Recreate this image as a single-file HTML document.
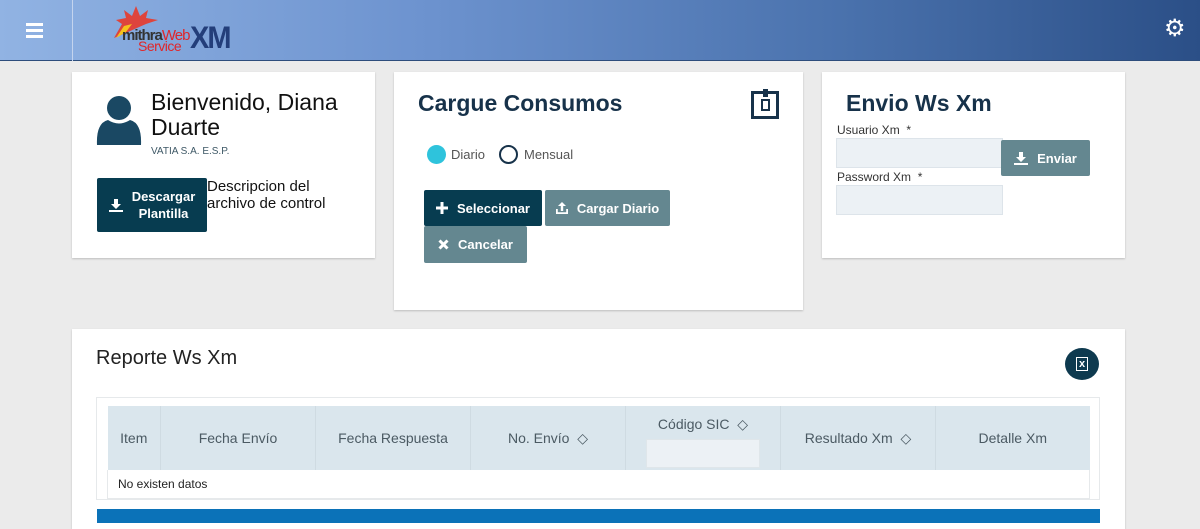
<!DOCTYPE html>
<html><head><meta charset="utf-8"><style>
*{box-sizing:border-box;margin:0;padding:0}
body{width:1200px;height:523px;overflow:hidden;background:#ebebeb;font-family:"Liberation Sans",sans-serif;position:relative}
.hdr{position:absolute;left:0;top:0;width:1200px;height:61px;background:linear-gradient(90deg,#91b3e3 0%,#6d93cf 35%,#4a72ad 70%,#2b4f87 100%);border-bottom:1px solid #2d4d7c}
.sep{position:absolute;left:72px;top:0;width:1px;height:61px;background:#c4d4ee}
.card{position:absolute;background:#fff;box-shadow:0 1px 2px rgba(0,0,0,.2)}
.btn{position:absolute;color:#fff;font-size:13px;font-weight:bold;display:flex;align-items:center;justify-content:center;border-radius:2px}
.btn svg{margin-right:9px;flex:none}
.dark{background:#073c50}
.gray{background:#648790}
.t{position:absolute;white-space:nowrap}
.inp{position:absolute;background:#ecf1f5;border:1px solid #dde4ea}
th{background:#dae6ed;color:#4b5a63;font-weight:normal;font-size:14px;border-right:1px solid #cfdbe2}
</style></head><body>
<div class="hdr"></div>
<div class="sep"></div>
<div style="position:absolute;left:26px;top:23px;width:17px;height:3px;background:#fff;box-shadow:0 6px 0 #fff,0 12px 0 #fff"></div>
<svg style="position:absolute;left:112px;top:4px" width="50" height="34"><path d="M2 34 L10 20 L4 16 L14 14 L12 6 L20 12 L24 2 L28 12 L36 6 L34 14 L46 16 L34 20 Z" fill="#e8392a" opacity=".9"/><path d="M4 34 L12 22 L20 20 L14 28 Z" fill="#f5c21b"/></svg>
<div class="t" style="left:122px;top:27px;font-size:15px;font-weight:bold;color:#333;letter-spacing:-1px">mithra<span style="color:#e0262a;font-weight:normal">Web</span></div>
<div class="t" style="left:138px;top:38px;font-size:14px;color:#e0262a;letter-spacing:-0.5px">Service</div>
<div class="t" style="left:190px;top:22px;font-size:29px;font-weight:bold;color:#233e7a;letter-spacing:-2px;transform:scaleY(1.1)">XM</div>
<div class="t" style="left:1164px;top:17px;font-size:24px;color:#fff;line-height:24px">⚙</div>

<div class="card" style="left:72px;top:72px;width:303px;height:186px"></div>
<svg style="position:absolute;left:96px;top:95px" width="46" height="50"><circle cx="23" cy="13" r="12" fill="#1a4863"/><path d="M1 50 Q0 28 12 25 Q23 32 34 25 Q46 28 45 50 Z" fill="#1a4863"/></svg>
<div class="t" style="left:151px;top:90px;font-size:23px;color:#111;line-height:25px">Bienvenido, Diana<br>Duarte</div>
<div class="t" style="left:151px;top:146px;font-size:10px;color:#3e5866">VATIA S.A. E.S.P.</div>
<div class="btn dark" style="left:97px;top:178px;width:110px;height:54px;line-height:17px;text-align:center"><svg width="14" height="13" viewBox="0 0 14 13"><path d="M5 0h4v5h3L7 10 2 5h3z M0 11h14v2H0z" fill="#fff"/></svg>Descargar<br>Plantilla</div>
<div class="t" style="left:207px;top:178px;font-size:15px;color:#111;line-height:17px">Descripcion del<br>archivo de control</div>

<div class="card" style="left:394px;top:72px;width:409px;height:238px"></div>
<div class="t" style="left:418px;top:90px;font-size:23px;font-weight:bold;color:#17324a">Cargue Consumos</div>
<div style="position:absolute;left:751px;top:91px;width:28px;height:28px;border:3px solid #17324a"><div style="position:absolute;left:7px;top:5px;width:9px;height:12px;border:2px solid #17324a"></div><div style="position:absolute;left:9px;top:-5px;width:5px;height:8px;background:#17324a"></div></div>
<div style="position:absolute;left:427px;top:145px;width:19px;height:19px;border-radius:50%;background:#2ec3dc"></div>
<div class="t" style="left:451px;top:147px;font-size:13px;color:#555">Diario</div>
<div style="position:absolute;left:499px;top:145px;width:19px;height:19px;border-radius:50%;border:2px solid #17324a"></div>
<div class="t" style="left:524px;top:147px;font-size:13px;color:#555">Mensual</div>
<div class="btn dark" style="left:424px;top:190px;width:118px;height:36px"><svg width="12" height="12"><path d="M4.5 0h3v4.5H12v3H7.5V12h-3V7.5H0v-3h4.5z" fill="#fff"/></svg>Seleccionar</div>
<div class="btn gray" style="left:545px;top:190px;width:125px;height:36px"><svg width="12" height="12"><path d="M6 0l4 4H7.2v5H4.8V4H2z M0 7h1.8v3.2h8.4V7H12v5H0z" fill="#fff"/></svg>Cargar Diario</div>
<div class="btn gray" style="left:424px;top:226px;width:103px;height:37px"><svg width="11" height="11"><path d="M1.5 1.5l8 8M9.5 1.5l-8 8" stroke="#fff" stroke-width="3"/></svg>Cancelar</div>

<div class="card" style="left:822px;top:72px;width:303px;height:186px"></div>
<div class="t" style="left:846px;top:90px;font-size:23px;font-weight:bold;color:#17324a">Envio Ws Xm</div>
<div class="t" style="left:837px;top:123px;font-size:12px;color:#333">Usuario Xm &nbsp;*</div>
<div class="inp" style="left:836px;top:138px;width:167px;height:30px"></div>
<div class="btn gray" style="left:1001px;top:140px;width:89px;height:36px"><svg width="14" height="13" viewBox="0 0 14 13"><path d="M5 0h4v5h3L7 10 2 5h3z M0 11h14v2H0z" fill="#fff"/></svg>Enviar</div>
<div class="t" style="left:837px;top:170px;font-size:12px;color:#333">Password Xm &nbsp;*</div>
<div class="inp" style="left:836px;top:185px;width:167px;height:30px"></div>

<div class="card" style="left:72px;top:329px;width:1053px;height:200px"></div>
<div class="t" style="left:96px;top:347px;font-size:20px;color:#222">Reporte Ws Xm</div>
<div style="position:absolute;left:1065px;top:348px;width:34px;height:32px;border-radius:50%;background:#0e3a4f;color:#fff;font-size:11px;font-weight:bold;text-align:center;line-height:32px"><span style="border:1.5px solid #fff;padding:0 2px">x</span></div>
<div style="position:absolute;left:96px;top:397px;width:1004px;height:103px;border:1px solid #e6e9eb"></div>
<table style="position:absolute;left:107px;top:406px;width:983px;border-collapse:collapse">
<tr style="height:64px"><th style="width:53px">Item</th><th style="width:155px">Fecha Envío</th><th style="width:155px">Fecha Respuesta</th><th style="width:155px">No. Envío &nbsp;◇</th><th style="width:155px;vertical-align:top;padding-top:10px">Código SIC &nbsp;◇<div style="margin:6px auto 0;width:114px;height:29px;background:#ecf1f5;border:1px solid #dfe6ea"></div></th><th style="width:155px">Resultado Xm &nbsp;◇</th><th style="border-right:none">Detalle Xm</th></tr>
<tr style="height:28px"><td colspan="7" style="font-size:12px;color:#222;padding-left:10px;border:1px solid #e6e9eb;border-top:none">No existen datos</td></tr>
</table>
<div style="position:absolute;left:97px;top:509px;width:1003px;height:14px;background:#0b72b8"></div>
</body></html>
